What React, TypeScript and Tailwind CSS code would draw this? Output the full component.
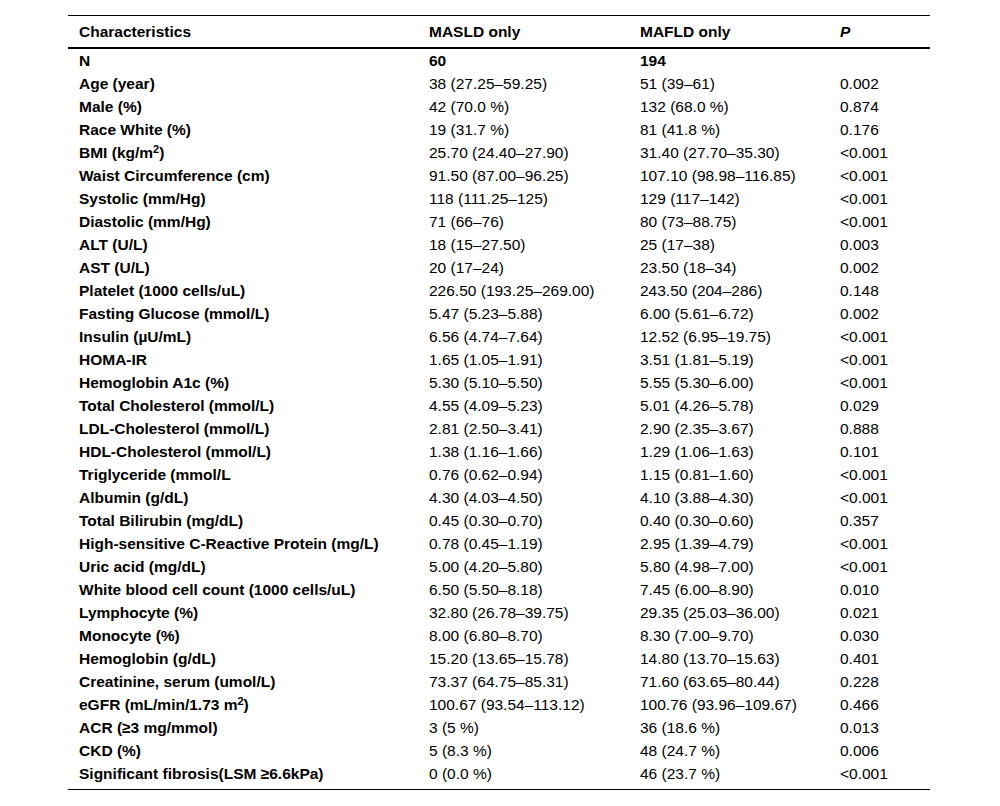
import React from "react";

type Row = { label: React.ReactNode; a: string; b: string; p: string };

const sq = <sup className="text-[11px]">2</sup>;

const rows: Row[] = [
  { label: "Age (year)", a: "38 (27.25–59.25)", b: "51 (39–61)", p: "0.002" },
  { label: "Male (%)", a: "42 (70.0 %)", b: "132 (68.0 %)", p: "0.874" },
  { label: "Race White (%)", a: "19 (31.7 %)", b: "81 (41.8 %)", p: "0.176" },
  { label: <>BMI (kg/m{sq})</>, a: "25.70 (24.40–27.90)", b: "31.40 (27.70–35.30)", p: "<0.001" },
  { label: "Waist Circumference (cm)", a: "91.50 (87.00–96.25)", b: "107.10 (98.98–116.85)", p: "<0.001" },
  { label: "Systolic (mm/Hg)", a: "118 (111.25–125)", b: "129 (117–142)", p: "<0.001" },
  { label: "Diastolic (mm/Hg)", a: "71 (66–76)", b: "80 (73–88.75)", p: "<0.001" },
  { label: "ALT (U/L)", a: "18 (15–27.50)", b: "25 (17–38)", p: "0.003" },
  { label: "AST (U/L)", a: "20 (17–24)", b: "23.50 (18–34)", p: "0.002" },
  { label: "Platelet (1000 cells/uL)", a: "226.50 (193.25–269.00)", b: "243.50 (204–286)", p: "0.148" },
  { label: "Fasting Glucose (mmol/L)", a: "5.47 (5.23–5.88)", b: "6.00 (5.61–6.72)", p: "0.002" },
  { label: "Insulin (µU/mL)", a: "6.56 (4.74–7.64)", b: "12.52 (6.95–19.75)", p: "<0.001" },
  { label: "HOMA-IR", a: "1.65 (1.05–1.91)", b: "3.51 (1.81–5.19)", p: "<0.001" },
  { label: "Hemoglobin A1c (%)", a: "5.30 (5.10–5.50)", b: "5.55 (5.30–6.00)", p: "<0.001" },
  { label: "Total Cholesterol (mmol/L)", a: "4.55 (4.09–5.23)", b: "5.01 (4.26–5.78)", p: "0.029" },
  { label: "LDL-Cholesterol (mmol/L)", a: "2.81 (2.50–3.41)", b: "2.90 (2.35–3.67)", p: "0.888" },
  { label: "HDL-Cholesterol (mmol/L)", a: "1.38 (1.16–1.66)", b: "1.29 (1.06–1.63)", p: "0.101" },
  { label: "Triglyceride (mmol/L", a: "0.76 (0.62–0.94)", b: "1.15 (0.81–1.60)", p: "<0.001" },
  { label: "Albumin (g/dL)", a: "4.30 (4.03–4.50)", b: "4.10 (3.88–4.30)", p: "<0.001" },
  { label: "Total Bilirubin (mg/dL)", a: "0.45 (0.30–0.70)", b: "0.40 (0.30–0.60)", p: "0.357" },
  { label: "High-sensitive C-Reactive Protein (mg/L)", a: "0.78 (0.45–1.19)", b: "2.95 (1.39–4.79)", p: "<0.001" },
  { label: "Uric acid (mg/dL)", a: "5.00 (4.20–5.80)", b: "5.80 (4.98–7.00)", p: "<0.001" },
  { label: "White blood cell count (1000 cells/uL)", a: "6.50 (5.50–8.18)", b: "7.45 (6.00–8.90)", p: "0.010" },
  { label: "Lymphocyte (%)", a: "32.80 (26.78–39.75)", b: "29.35 (25.03–36.00)", p: "0.021" },
  { label: "Monocyte (%)", a: "8.00 (6.80–8.70)", b: "8.30 (7.00–9.70)", p: "0.030" },
  { label: "Hemoglobin (g/dL)", a: "15.20 (13.65–15.78)", b: "14.80 (13.70–15.63)", p: "0.401" },
  { label: "Creatinine, serum (umol/L)", a: "73.37 (64.75–85.31)", b: "71.60 (63.65–80.44)", p: "0.228" },
  { label: <>eGFR (mL/min/1.73 m{sq})</>, a: "100.67 (93.54–113.12)", b: "100.76 (93.96–109.67)", p: "0.466" },
  { label: "ACR (≥3 mg/mmol)", a: "3 (5 %)", b: "36 (18.6 %)", p: "0.013" },
  { label: "CKD (%)", a: "5 (8.3 %)", b: "48 (24.7 %)", p: "0.006" },
  { label: "Significant fibrosis(LSM ≥6.6kPa)", a: "0 (0.0 %)", b: "46 (23.7 %)", p: "<0.001" },
];

const grid = "grid grid-cols-[350px_211px_200px_101px] whitespace-nowrap";
const cell = "pl-[11px]";

export default function App() {
  return (
    <div className="w-[1000px] h-[806px] bg-white text-black text-[15.5px] font-['Liberation_Sans',Arial,sans-serif] pt-[15px] pl-[68px]">
      <div className="w-[862px] border-t border-b border-black pb-[4px]">
        <div className={`${grid} h-[33px] leading-[31px] border-b-2 border-black font-bold`}>
          <div className={cell}>Characteristics</div>
          <div className={cell}>MASLD only</div>
          <div className={cell}>MAFLD only</div>
          <div className={`${cell} italic`}>P</div>
        </div>
        <div className={`${grid} h-[23px] leading-[24px] font-bold`}>
          <div className={cell}>N</div>
          <div className={cell}>60</div>
          <div className={cell}>194</div>
          <div className={cell}></div>
        </div>
        {rows.map((r, i) => (
          <div key={i} className={`${grid} h-[23px] leading-[24px]`}>
            <div className={`${cell} font-bold`}>{r.label}</div>
            <div className={cell}>{r.a}</div>
            <div className={cell}>{r.b}</div>
            <div className={cell}>{r.p}</div>
          </div>
        ))}
      </div>
    </div>
  );
}
